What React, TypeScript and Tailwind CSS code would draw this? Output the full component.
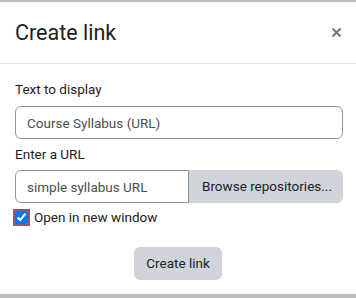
export default function App() {
  return (
    <div className="w-[356px] h-[298px] bg-white flex flex-col text-[#1d2125] overflow-hidden" style={{ fontFamily: "Roboto, 'Liberation Sans', sans-serif" }}>
      <div className="h-[2px] bg-[#bdbdbd] shrink-0" />
      {/* header */}
      <div className="h-[62px] shrink-0 flex items-center justify-between pl-[15px] pr-[14px] border-b border-[#dee2e6]">
        <h5 className="text-[21.5px] leading-[1.2] m-0">Create link</h5>
        <button type="button" className="w-[12px] h-[12px] flex items-center justify-center text-[#6f767d]">
          <svg width="11" height="11" viewBox="0 0 11 11">
            <path d="M1.5 1.5 L9.5 9.5 M9.5 1.5 L1.5 9.5" stroke="currentColor" strokeWidth="2" />
          </svg>
        </button>
      </div>
      {/* body */}
      <div className="flex-1 px-[15px] pt-[15px] text-[13.5px]">
        <label htmlFor="link-text" className="block leading-[21px] mb-[6px]">Text to display</label>
        <input
          id="link-text"
          type="text"
          defaultValue="Course Syllabus (URL)"
          className="block w-[328px] h-[33px] px-[11px] border border-[#8f959e] rounded-[6px] text-[#495057] text-[13.5px] outline-none"
        />
        <label htmlFor="link-url" className="block leading-[21px] mt-[5px] mb-[5px]">Enter a URL</label>
        <div className="flex w-[328px] h-[33px]">
          <input
            id="link-url"
            type="text"
            defaultValue="simple syllabus URL"
            className="w-[174px] h-full px-[11px] border border-[#8f959e] rounded-l-[6px] text-[#495057] text-[13.5px] outline-none"
          />
          <button type="button" className="flex-1 h-full bg-[#ced4da] rounded-r-[6px] text-[13.5px] text-[#1d2125] text-left pl-[13px]">
            Browse repositories...
          </button>
        </div>
        <div className="flex items-center mt-[4px] h-[21px]">
          <span className="w-[17px] h-[17px] -ml-[2px] bg-[#955868] flex items-center justify-center">
            <input type="checkbox" defaultChecked className="w-[13px] h-[13px] m-0 accent-[#0075ff]" />
          </span>
          <label className="ml-[4px] leading-[21px]">Open in new window</label>
        </div>
        <div className="flex justify-center mt-[19px]">
          <button type="button" className="h-[33px] px-[12px] bg-[#ced4da] rounded-[6px] text-[13.5px] text-[#1d2125]">
            Create link
          </button>
        </div>
      </div>
      <div className="h-[4px] bg-[#bcbcbc] shrink-0" />
    </div>
  );
}
